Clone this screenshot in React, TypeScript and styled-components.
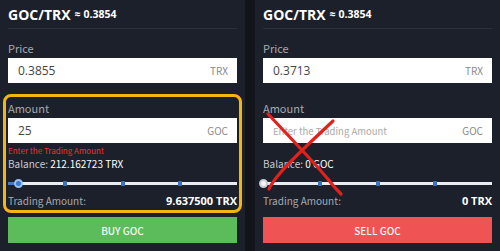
import styled, { createGlobalStyle } from 'styled-components'

const GlobalStyle = createGlobalStyle`
    html, body {
        margin: 0;
        padding: 0;
        background: #111419;
    }
    body {
        font-family: "Noto Sans CJK SC", "Open Sans", sans-serif;
    }
`

interface PanelProps {
    side: 'buy' | 'sell'
    price: string
    amount: string
    unit: string
    error?: string
    balanceValue: string
    percent: number
    total: string
    highlight?: boolean
    crossed?: boolean
}

const marks = [25, 50, 75]

const TradePanel = (props: PanelProps) => (
    <Panel>
        <Header>
            <Pair>GOC/TRX</Pair>
            <Rate>≈ 0.3854</Rate>
        </Header>

        <Label>Price</Label>
        <InputBox>
            <Value>{props.price}</Value>
            <Unit>TRX</Unit>
        </InputBox>

        <AmountSection highlight={props.highlight}>
            <Label>Amount</Label>
            <InputBox>
                <Value placeholder={!props.amount}>{props.amount || 'Enter the Trading Amount'}</Value>
                <Unit>{props.unit}</Unit>
            </InputBox>
            <ErrorText>{props.error}</ErrorText>
            <Balance>
                <span>Balance: </span>
                <strong>{props.balanceValue}</strong>
            </Balance>

            <Slider>
                <Track />
                <Fill style={{ width: `${props.percent}%` }} />
                {marks.map(m => (
                    <Mark key={m} style={{ left: `${m}%` }} />
                ))}
                <Handle active={props.percent > 0} style={{ left: `${props.percent}%` }} />
            </Slider>

            <TotalRow>
                <span>Trading Amount:</span>
                <strong>{props.total}</strong>
            </TotalRow>
        </AmountSection>

        <ActionButton side={props.side}>{props.side === 'buy' ? 'BUY GOC' : 'SELL GOC'}</ActionButton>

        {props.crossed && (
            <Cross viewBox="0 0 245 251" width="245" height="251">
                <path d="M13 114 C 30 132, 55 158, 72 178 C 78 186, 84 192, 86 194" />
                <path d="M78 121 C 60 138, 38 158, 26 172 C 20 179, 16 184, 14 189" />
            </Cross>
        )}
    </Panel>
)

const App = () => (
    <>
        <GlobalStyle />
        <Layout>
            <TradePanel
                side="buy"
                price="0.3855"
                amount="25"
                unit="GOC"
                error="Enter the Trading Amount"
                balanceValue="212.162723 TRX"
                percent={4.54}
                total="9.637500 TRX"
                highlight
            />
            <TradePanel
                side="sell"
                price="0.3713"
                amount=""
                unit="GOC"
                balanceValue="0 GOC"
                percent={0}
                total="0 TRX"
                crossed
            />
        </Layout>
    </>
)

const Layout = styled.div`
    display: flex;
    gap: 10px;
    width: 500px;
    height: 251px;
    background: #111419;
`

const Panel = styled.div`
    position: relative;
    width: 245px;
    box-sizing: border-box;
    padding: 0 8px;
    background: #1c202a;
    display: flex;
    flex-direction: column;
`

const Header = styled.div`
    height: 29px;
    box-sizing: border-box;
    display: flex;
    align-items: center;
    gap: 4px;
    border-bottom: 1px solid #2b303c;
    color: #fff;
    font-family: "Open Sans", sans-serif;
    font-weight: 700;
    margin-bottom: 10px;
`

const Pair = styled.span`
    font-size: 14px;
`

const Rate = styled.span`
    font-size: 10.5px;
`

const Label = styled.div`
    font-size: 11px;
    color: #a6a9b0;
    height: 18px;
    line-height: 18px;
    margin-bottom: 1px;
`

const InputBox = styled.div`
    height: 25px;
    background: #fff;
    display: flex;
    align-items: center;
    justify-content: space-between;
    padding: 0 9px 0 10px;
`

const Value = styled.span<{ placeholder?: boolean }>`
    font-family: ${p => (p.placeholder ? '"Noto Sans CJK SC", sans-serif' : '"Open Sans", sans-serif')};
    font-size: ${p => (p.placeholder ? '9.5px' : '12px')};
    color: ${p => (p.placeholder ? '#a9a9a9' : '#444')};
`

const Unit = styled.span`
    font-size: 10px;
    color: #8a8a8a;
`

const AmountSection = styled.div<{ highlight?: boolean }>`
    margin-top: 16px;
    border-radius: 3px;
    outline: ${p => (p.highlight ? '3px solid #f3b515' : 'none')};
    outline-offset: 2px;
`

const ErrorText = styled.div`
    height: 12px;
    line-height: 12px;
    margin-top: 2px;
    font-size: 8px;
    color: #e6372f;
`

const Balance = styled.div`
    height: 14px;
    line-height: 14px;
    font-size: 10px;
    color: #c8cad0;

    strong {
        font-weight: 400;
        color: #fff;
    }
`

const Slider = styled.div`
    position: relative;
    height: 10px;
    margin: 7px 0 4px;
`

const Track = styled.div`
    position: absolute;
    left: 0;
    right: 0;
    top: 4px;
    height: 3px;
    background: #e9ecf1;
`

const Fill = styled.div`
    position: absolute;
    left: 0;
    top: 4px;
    height: 3px;
    background: #3b7ad0;
`

const Mark = styled.div`
    position: absolute;
    top: 3px;
    width: 4px;
    height: 5px;
    margin-left: -2px;
    background: #3b72c4;
    border-radius: 1px;
`

const Handle = styled.div<{ active: boolean }>`
    position: absolute;
    top: 1px;
    width: 9px;
    height: 9px;
    margin-left: -4px;
    border-radius: 50%;
    box-sizing: border-box;
    background: ${p => (p.active ? '#3b7ad0' : '#f4f5f7')};
    border: 2px solid ${p => (p.active ? '#9cc0ee' : '#c9ccd2')};
`

const TotalRow = styled.div`
    display: flex;
    justify-content: space-between;
    align-items: center;
    height: 16px;
    font-size: 10px;
    color: #a6a9b0;

    strong {
        font-family: "Open Sans", sans-serif;
        font-size: 11px;
        font-weight: 700;
        color: #fff;
    }
`

const ActionButton = styled.button<{ side: 'buy' | 'sell' }>`
    margin-top: 9px;
    height: 26px;
    border: none;
    border-radius: 0;
    background: ${p => (p.side === 'buy' ? '#5cbc5c' : '#ef5353')};
    color: #f2f8f2;
    font-family: inherit;
    font-size: 10px;
    font-weight: 500;
    cursor: pointer;
`

const Cross = styled.svg`
    position: absolute;
    left: 0;
    top: 0;
    pointer-events: none;

    path {
        fill: none;
        stroke: #e3201b;
        stroke-width: 3.2;
        stroke-linecap: round;
    }
`

export default App
